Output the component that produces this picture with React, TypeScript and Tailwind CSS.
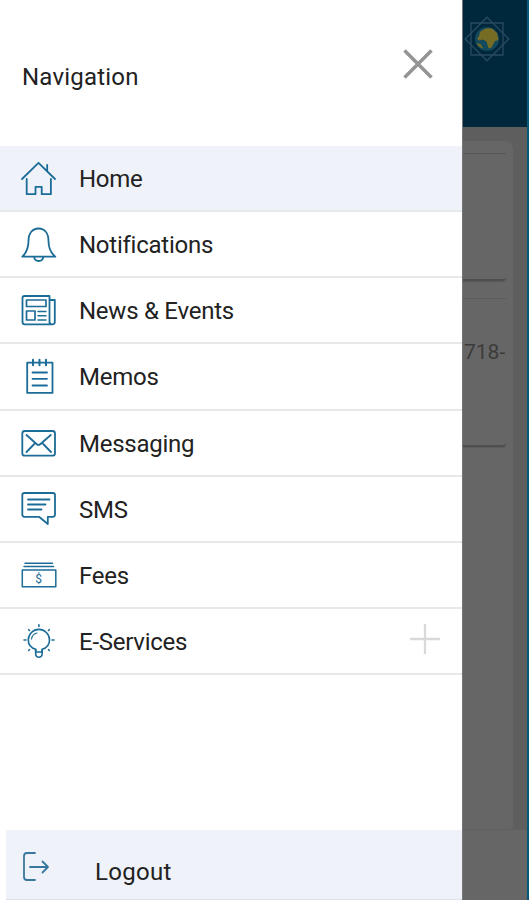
import type { ReactNode } from "react";

function RowIcon({ children }: { children: ReactNode }) {
  return (
    <svg
      viewBox="16 0 44 66"
      className="h-[66px] w-11 shrink-0"
      fill="none"
      stroke="#1c6c98"
      strokeWidth="1.8"
      strokeLinecap="round"
      strokeLinejoin="round"
      aria-hidden="true"
    >
      {children}
    </svg>
  );
}

const items: { label: string; icon: ReactNode; expandable?: boolean }[] = [
  {
    label: "Home",
    icon: (
      <>
        <path d="M22 33 38.5 16.8 55 33M47.2 24.5V18.8" />
        <path d="M26.7 33v15.2h8.8v-7.4h6.2v7.4h9.2V33" />
      </>
    ),
  },
  {
    label: "Notifications",
    icon: (
      <>
        <path d="M22.3 44.7c5-4.7 6.2-9.5 6.2-15.7 0-8 4-12.5 10-12.5s10 4.5 10 12.5c0 6.2 1.2 11 6.8 15.7Z" />
        <path d="M34.2 45c.3 5.3 8.7 5.3 9 0" />
      </>
    ),
  },
  {
    label: "News & Events",
    icon: (
      <>
        <path d="M49.5 18H24.5q-2 0-2 2v24q0 2.300 2.300 2.300h28q2-.3 2-2.300V22h-5.300V18Zm0 4v22q0 2.300 2.500 2.300" />
        <path d="M26.500 22h19.500v6.500H26.500Z M26.500 33h8.500v9h-8.500Z" strokeWidth="1.700" />
        <path d="M38 33.500h8M38 37.700h8M38 41.900h8" strokeWidth="1.500" />
      </>
    ),
  },
  {
    label: "Memos",
    icon: (
      <>
        <path d="M27.200 18.700h25.300v30.200H27.200Z" />
        <path d="M33 15.700v5.600M39.500 15.700v5.600M46 15.700v5.600" strokeWidth="2" />
        <path d="M32.500 28.500h14.500M32.500 34.800h14.500M32.500 41.500h14.500" />
      </>
    ),
  },
  {
    label: "Messaging",
    icon: (
      <>
        <rect x="22.300" y="20" width="32.700" height="24.700" rx="2.500" />
        <path d="m26.500 24 10 9q2 1.800 4 0l10.300-9M26.500 41l7.800-8M51 41l-7.800-8" />
      </>
    ),
  },
  {
    label: "SMS",
    icon: (
      <>
        <path d="M24.500 16h28.300q2.200 0 2.200 2.200v19.400q0 2.200-2.200 2.200h-5V47L39 39.800H24.500q-2.200 0-2.200-2.200V18.200q0-2.200 2.200-2.200Z" />
        <path d="M28 22.500h21.500M28 27.500h17.500M28 32.500h13.500" />
      </>
    ),
  },
  {
    label: "Fees",
    icon: (
      <>
        <path d="M25 20.300h27.500M24 23.500h29.500" strokeWidth="1.500" />
        <path d="M22.300 27h33.500v16.800H22.300Z" strokeWidth="1.500" />
        <text
          x="38.500"
          y="39.800"
          textAnchor="middle"
          fill="#1c6c98"
          stroke="none"
          className="font-['Roboto',sans-serif] text-[12px]"
        >
          $
        </text>
      </>
    ),
  },
  {
    label: "E-Services",
    expandable: true,
    icon: (
      <>
        <path
          d="M35.700 43v-2.700c-5-1.500-7.400-5.300-7.400-9.300a10.600 10.600 0 0 1 21.200 0c0 4-2.500 7.800-7.300 9.300V43"
          strokeWidth="1.600"
        />
        <path d="M35.700 40.500v5q.4 2.800 3.200 2.800t3.200-2.800v-5M36 43h6" strokeWidth="1.600" />
        <path d="M31.500 30q.8-5 5.500-6" strokeWidth="1.200" />
        <path
          d="M38.900 15.700v1.800M24 31h2M52 31h2M28.700 20.700l.8.800M49.300 20.700l-.8.800M28.700 41.500l.8-.8M49.300 41.500l-.8-.8"
          strokeWidth="1.600"
        />
      </>
    ),
  },
];

function Crest() {
  return (
    <svg viewBox="0 0 46 46" className="h-[46px] w-[46px]" fill="none" aria-hidden="true">
      <g stroke="#2a4a61" strokeWidth="1.300">
        <path d="M7 7h32v32H7Z" />
        <path d="M23 1.200 44.800 23 23 44.800 1.200 23Z" />
      </g>
      <circle cx="23" cy="23" r="12" fill="#13495d" />
      <path d="M16 16q5-5 12-3.500l5 4.500 1.500 7-3.500 1-3.500 6.500-3 1-2-7-3.500-2-4 1-2-2 2-2Z" fill="#776c24" />
      <path d="m12.500 27 4 1 3 4.500q-5-1-7-5.500Z" fill="#706a27" />
    </svg>
  );
}

function DimmedPage() {
  return (
    <div className="flex min-w-0 flex-1 flex-col border-r-2 border-[#07597b] bg-[#5e5e5e]">
      <div className="h-[127px] shrink-0 bg-[#00283d] pt-4 pl-px">
        <Crest />
      </div>
      <div className="mt-[14px] mr-[14px] flex h-[688px] shrink-0 flex-col rounded-tr-lg rounded-br bg-[#666]">
        <div className="mt-3 mr-[7px] h-[128px] rounded-br-sm border-t border-b-2 border-t-[#555] border-b-[#4e4e4e] shadow-[0_1px_1px_#5a5a5a]" />
        <div className="mt-[17px] mr-[7px] h-[149px] rounded-br-sm border-t border-b-2 border-t-[#5b5b5b] border-b-[#4e4e4e] pt-[41px] pl-px shadow-[0_1px_1px_#5a5a5a]">
          <span className="block text-[21px] leading-6 whitespace-nowrap text-[#3b3b3b]">718-</span>
        </div>
      </div>
      <div className="flex-1 border-t border-[#606060] bg-[#666]" />
    </div>
  );
}

export default function App() {
  return (
    <div className="flex h-[900px] w-[529px] overflow-hidden bg-white font-['Roboto',sans-serif] text-[#222]">
      <aside className="flex w-[463px] shrink-0 flex-col border-r border-[#777] bg-white">
        <header className="flex h-[146px] shrink-0 items-start justify-between pr-[29px] pl-[22px]">
          <h1 className="mt-[62px] text-2xl leading-[30px] font-normal tracking-[0.2px]">Navigation</h1>
          <button className="mt-[49px]" aria-label="Close">
            <svg viewBox="0 0 30 30" className="h-[30px] w-[30px]" stroke="#949494" strokeWidth="3.500">
              <path d="m1.500 1.500 27 27M28.500 1.500l-27 27" />
            </svg>
          </button>
        </header>
        <nav className="flex h-[529px] shrink-0 flex-col">
          {items.map(({ label, icon, expandable }) => (
            <a
              key={label}
              className="flex min-h-0 flex-1 items-center border-b-2 border-[#e7e8ea] pt-[2px] pr-[22px] pl-4 first:bg-[#eff3f9]"
            >
              <RowIcon>{icon}</RowIcon>
              <span className="ml-[19px] text-2xl leading-8 tracking-[-0.25px]">{label}</span>
              {expandable && (
                <svg viewBox="0 0 30 30" className="-mt-[5px] ml-auto h-[30px] w-[30px]" stroke="#d9d9d9" strokeWidth="2.300">
                  <path d="M15 0v30M0 15h30" />
                </svg>
              )}
            </a>
          ))}
        </nav>
        <footer className="mt-auto ml-[6px] flex h-[70px] shrink-0 items-start border-b border-[#dce2ec] bg-[#eff3f9] pl-4">
          <svg
            viewBox="0 0 30 32"
            className="mt-[21px] h-8 w-[30px]"
            fill="none"
            stroke="#39789e"
            strokeWidth="1.800"
            strokeLinecap="round"
            strokeLinejoin="round"
          >
            <path d="M13 2H5Q2 2 2 5v21q0 3 3 3h8M8 16h18M20.500 10.500 26 16l-5.500 5.500" />
          </svg>
          <span className="mt-[26px] ml-[43px] text-2xl leading-8 tracking-[0.3px]">Logout</span>
        </footer>
      </aside>
      <DimmedPage />
    </div>
  );
}
